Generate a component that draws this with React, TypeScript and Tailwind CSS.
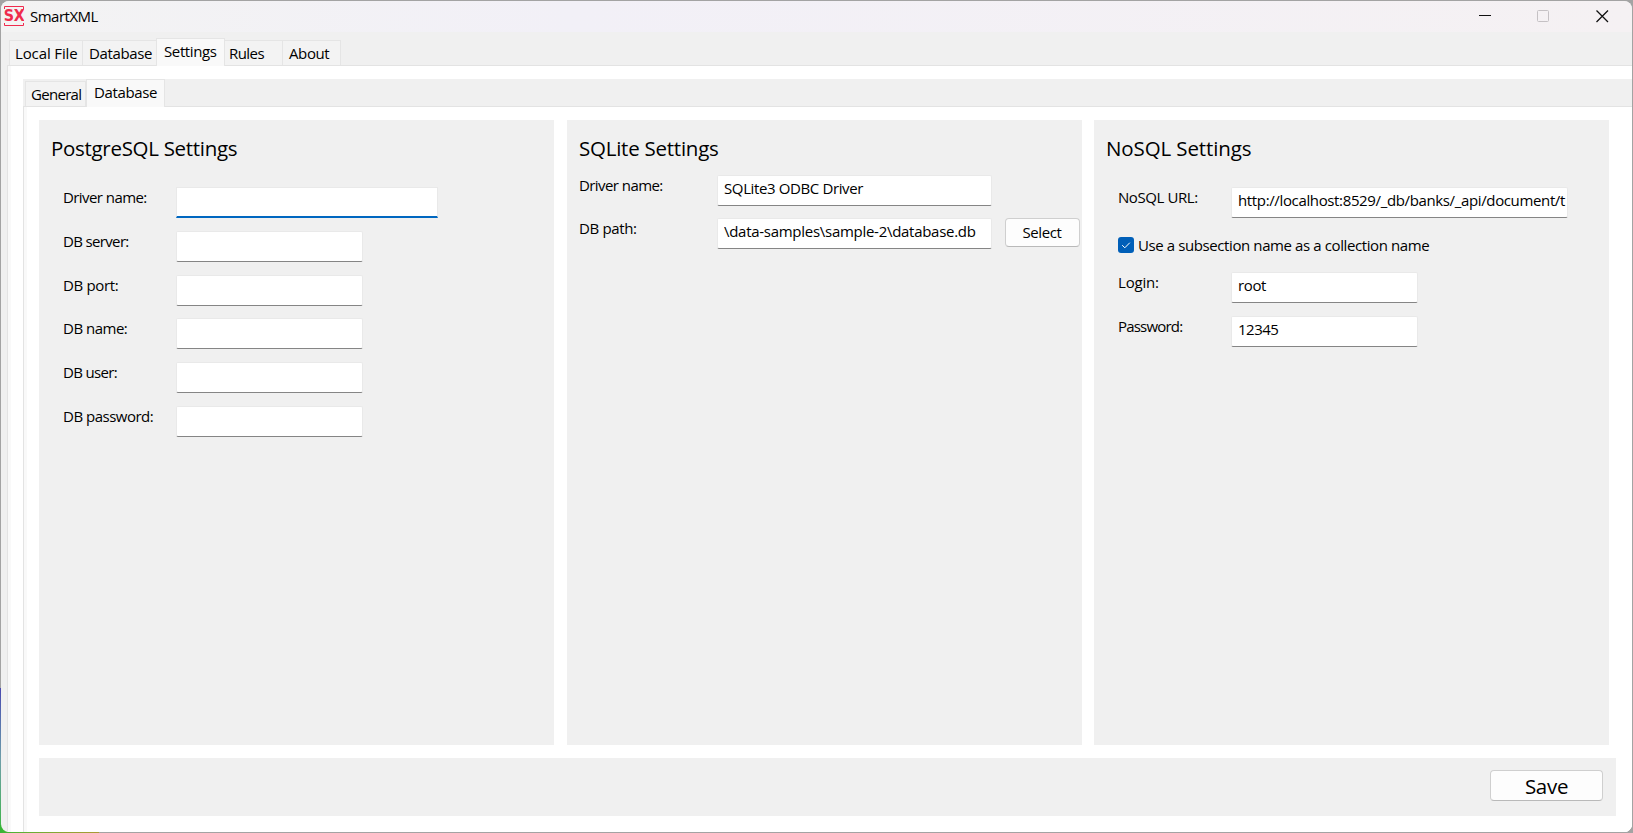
import React, { useState } from 'react';
import clsx from 'clsx';

type TabProps = { label: string; active?: boolean; className?: string };

function Tab({ label, active, className }: TabProps) {
  return (
    <div
      role="tab"
      aria-selected={!!active}
      className={clsx(
        'shrink-0 whitespace-nowrap border-t border-[#e5e5e5] leading-5',
        active ? 'relative z-10 -mb-px border-x bg-[#f9f9f9]' : 'border-r bg-[#f3f3f3]',
        className,
      )}
    >
      {label}
    </div>
  );
}

type FieldProps = {
  label: string;
  value?: string;
  labelWidth: string;
  width: string;
  spacing?: string;
  valueSpacing?: string;
  focused?: boolean;
  className?: string;
  children?: React.ReactNode;
};

function Field({ label, value = '', labelWidth, width, spacing, valueSpacing, focused, className, children }: FieldProps) {
  const [text, setText] = useState(value);
  return (
    <div className={clsx('flex h-[31px] items-start', className)}>
      <label className={clsx('shrink-0 whitespace-nowrap leading-5', labelWidth, spacing)}>{label}</label>
      <input
        value={text}
        onChange={(e) => setText(e.target.value)}
        className={clsx(
          'h-[31px] shrink-0 border border-[#e9e9e9] bg-white pr-px pl-1.5 leading-5 outline-none',
          focused ? 'border-b-2 border-b-[#0067c0]' : 'rounded-[2px] border-b-[#858585] pb-1.5',
          width,
          valueSpacing,
        )}
      />
      {children}
    </div>
  );
}

function Panel({ title, titleClass, className, children }: { title: string; titleClass: string; className: string; children: React.ReactNode }) {
  return (
    <section className={clsx('h-[625px] w-[515px] shrink-0 bg-[#f0f0f0] pt-3.5', className)}>
      <h2 className={clsx('h-7 pl-3 text-[20.5px] leading-7', titleClass)}>{title}</h2>
      {children}
    </section>
  );
}

function Logo() {
  return (
    <svg width="20" height="20" viewBox="0 0 20 20" className="shrink-0">
      <path d="M0.5 3V0.5H19.5V3M0.5 17V19.5H19.5V17" fill="none" stroke="#ef2b4d" />
      <text x="-0.3" y="15.4" textLength="20.6" lengthAdjust="spacingAndGlyphs" fill="#ef2b4d" fontFamily="DejaVu Sans, sans-serif" fontWeight="700" fontSize="15">
        SX
      </text>
    </svg>
  );
}

export default function App() {
  return (
    <div className="relative h-[833px] w-[1633px] overflow-hidden bg-[#a3a3a3] p-px font-['Open_Sans',sans-serif] text-[15px] tracking-[-0.38px] text-black">
      <div className="absolute bottom-0 left-0 h-[145px] w-2 bg-linear-to-b from-[#4a48b0] via-[#6f9fa8] to-[#35b535]" />
      <div className="absolute bottom-0 left-0 h-2 w-[99px] bg-linear-to-r from-[#35b535] to-[#a99a35]" />

      <div className="relative flex h-[831px] flex-col overflow-hidden rounded-lg bg-[#f0f0f0]">
        <header className="flex h-[31px] shrink-0 items-start bg-linear-to-r from-[#f3f3f3] via-[#f2f0f7] via-35% to-[#f5f1f3] pl-[3px]">
          <div className="pt-[5px]">
            <Logo />
          </div>
          <span className="pt-[5px] pl-1.5 leading-5 tracking-[-0.5px]">SmartXML</span>
          <div className="mt-2 mr-[23px] ml-auto flex items-center gap-[46px]">
            <svg width="12" height="14" viewBox="0 0 12 14">
              <path d="M0 6.5H12" stroke="#111" />
            </svg>
            <svg width="13" height="14" viewBox="0 0 13 14">
              <rect x="0.5" y="1.5" width="11" height="11" rx="1" fill="none" stroke="#c5c1c4" />
            </svg>
            <svg width="13" height="14" viewBox="0 0 13 14">
              <path d="M0.5 1.5L12 13M12 1.5L0.5 13" stroke="#111" strokeWidth="1.3" />
            </svg>
          </div>
        </header>

        <nav role="tablist" className="flex h-[33px] shrink-0 items-end pl-2">
          <Tab label="Local File" className="h-[25px] w-[74px] border-l pt-0.5 pl-[5px] tracking-[-0.12px]" />
          <Tab label="Database" className="h-[25px] w-[73px] border-r-0 pt-0.5 pl-1.5" />
          <Tab label="Settings" active className="h-[28px] w-[69px] pt-0.5 pl-[7px]" />
          <Tab label="Rules" className="h-[25px] w-[58px] pt-0.5 pl-1 tracking-[-0.55px]" />
          <Tab label="About" className="h-[25px] w-[58px] pt-0.5 pl-1.5" />
        </nav>

        <main className="ml-1.5 flex grow flex-col border-t border-l border-[#e3e3e3] bg-[#f9f9f9] pl-[3px]">
          <div className="flex grow flex-col bg-white pt-[13px] pl-3">
            <nav role="tablist" className="flex h-[27px] shrink-0 items-end bg-[#f0f0f0] pl-0.5">
              <Tab label="General" className="h-[25px] w-[61px] border-l pt-0.5 pl-[5px] tracking-[-0.7px]" />
              <Tab label="Database" active className="h-[28px] w-[79px] pt-0.5 pl-[7px]" />
            </nav>

            <div className="flex grow flex-col border-t border-l border-[#e3e3e3] bg-[#f9f9f9] pl-[3px]">
              <div className="flex grow flex-col bg-white pt-[13px] pl-3">
                <div className="flex">
                  <Panel title="PostgreSQL Settings" titleClass="tracking-[-0.3px]" className="mr-[13px]">
                    <div className="mt-[25px] flex flex-col pl-6">
                      <Field label="Driver name:" labelWidth="w-[113px]" width="w-[262px]" spacing="tracking-[-0.57px]" focused />
                      <Field label="DB server:" labelWidth="w-[113px]" width="w-[187px]" spacing="tracking-[-0.65px]" className="mt-[13px]" />
                      <Field label="DB port:" labelWidth="w-[113px]" width="w-[187px]" spacing="tracking-[-0.35px]" className="mt-[13px]" />
                      <Field label="DB name:" labelWidth="w-[113px]" width="w-[187px]" spacing="tracking-[-0.5px]" className="mt-3" />
                      <Field label="DB user:" labelWidth="w-[113px]" width="w-[187px]" spacing="tracking-[-0.65px]" className="mt-[13px]" />
                      <Field label="DB password:" labelWidth="w-[113px]" width="w-[187px]" spacing="tracking-[-0.5px]" className="mt-[13px]" />
                    </div>
                  </Panel>

                  <Panel title="SQLite Settings" titleClass="tracking-[-0.24px]" className="mr-3">
                    <div className="mt-[13px] flex flex-col gap-3 pl-3">
                      <Field label="Driver name:" value="SQLite3 ODBC Driver" labelWidth="w-[138px]" width="w-[275px]" spacing="tracking-[-0.57px]" valueSpacing="tracking-[-0.38px]" />
                      <Field
                        label="DB path:"
                        value={'\\data-samples\\sample-2\\database.db'}
                        labelWidth="w-[138px]"
                        width="w-[275px]"
                        spacing="tracking-[-0.35px]"
                        valueSpacing="tracking-[-0.28px]"
                      >
                        <button className="ml-[13px] h-[29px] w-[75px] shrink-0 rounded border border-[#cfcfcf] border-b-[#b9b9b9] bg-[#fdfdfd] pr-px pb-0.5 leading-5">
                          Select
                        </button>
                      </Field>
                    </div>
                  </Panel>

                  <Panel title="NoSQL Settings" titleClass="tracking-[-0.12px]" className="">
                    <div className="mt-[25px] flex flex-col pl-6">
                      <Field
                        label="NoSQL URL:"
                        value="http://localhost:8529/_db/banks/_api/document/t"
                        labelWidth="w-[113px]"
                        width="w-[337px]"
                        spacing="tracking-[-0.42px]"
                        valueSpacing="tracking-[-0.36px]"
                      />
                      <div className="mt-[17px] flex h-5 items-center gap-1">
                        <span role="checkbox" aria-checked="true" className="flex size-4 items-center justify-center rounded-[3px] bg-[#005fb8]">
                          <svg width="16" height="16" viewBox="0 0 16 16">
                            <path d="M4.2 8.2L6.8 10.8L11.8 5.7" fill="none" stroke="#fff" strokeWidth="1" />
                          </svg>
                        </span>
                        <span className="tracking-[-0.4px]">Use a subsection name as a collection name</span>
                      </div>
                      <Field label="Login:" value="root" labelWidth="w-[113px]" width="w-[187px]" spacing="tracking-[-0.2px]" className="mt-[17px]" />
                      <Field
                        label="Password:"
                        value="12345"
                        labelWidth="w-[113px]"
                        width="w-[187px]"
                        spacing="tracking-[-0.8px]"
                        valueSpacing="tracking-[-0.5px]"
                        className="mt-[13px]"
                      />
                    </div>
                  </Panel>
                </div>

                <footer className="mt-[13px] flex h-[58px] w-[1577px] items-start justify-end bg-[#f0f0f0] pt-3 pr-[13px]">
                  <button className="h-[31px] w-[113px] rounded border border-[#cfcfcf] border-b-[#b9b9b9] bg-[#fdfdfd] text-[20.5px] leading-7 tracking-[-0.29px]">
                    Save
                  </button>
                </footer>
              </div>
            </div>
          </div>
        </main>
      </div>
    </div>
  );
}
